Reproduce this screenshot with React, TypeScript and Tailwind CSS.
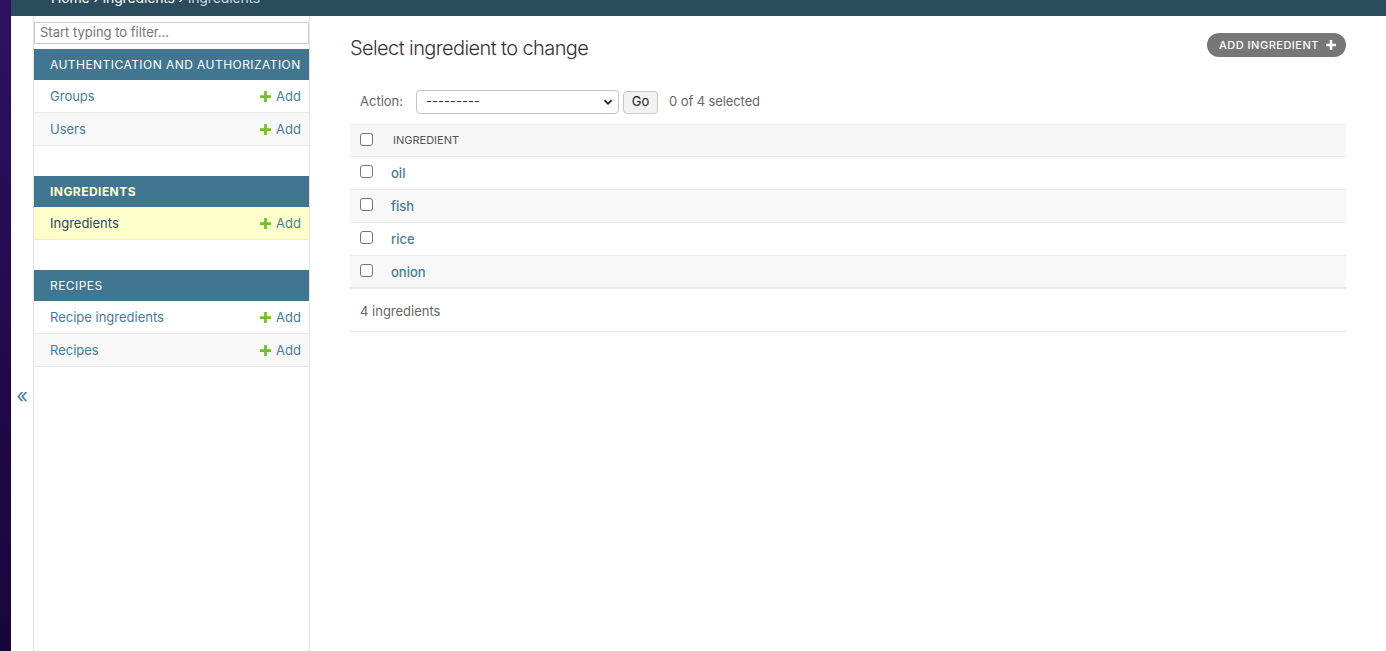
import React from "react";

const font = { fontFamily: 'Inter, "Noto Sans", "Liberation Sans", sans-serif' };

function Plus({ className = "" }: { className?: string }) {
  return (
    <svg viewBox="0 0 12 12" className={className} aria-hidden>
      <path d="M4.5 0h3v4.5H12v3H7.5V12h-3V7.5H0v-3h4.5z" fill="currentColor" />
    </svg>
  );
}

function Row({ label, alt, current }: { label: string; alt?: boolean; current?: boolean }) {
  const bg = current ? "bg-[#ffffcc]" : alt ? "bg-[#f8f8f8]" : "bg-white";
  return (
    <div className={`flex h-[33px] items-center justify-between border-b border-[#e8e8e8] pl-4 pr-[8px] pt-[1px] ${bg}`}>
      <span className={`text-[13px] ${current ? "text-[#264b5d]" : "text-[#447e9b]"}`}>{label}</span>
      <span className="flex items-center gap-[5px] text-[13px] text-[#447e9b]">
        <Plus className="h-[11px] w-[11px] text-[#70bf2b]" />
        Add
      </span>
    </div>
  );
}

function Caption({ label, current }: { label: string; current?: boolean }) {
  return (
    <div className="flex h-[31px] items-center bg-[#417690] pl-4">
      <span
        className={`text-[12px] uppercase tracking-[0.45px] ${current ? "font-bold text-[#ffffcc]" : "text-white"}`}
      >
        {label}
      </span>
    </div>
  );
}

function Checkbox({ className = "" }: { className?: string }) {
  return <span className={`block h-[13px] w-[13px] rounded-[3px] border border-[#767676] bg-white ${className}`} />;
}

export default function App() {
  const items = ["oil", "fish", "rice", "onion"];
  return (
    <div className="flex h-[651px] w-[1386px] overflow-hidden bg-white" style={font}>
      <div className="w-[11px] shrink-0 bg-gradient-to-b from-[#2e1062] to-[#17063a]" />
      <div className="flex min-w-0 flex-1 flex-col">
        <div className="h-[16px] shrink-0 overflow-hidden bg-[#2b4c5c]">
          <div className="mt-[-9px] pl-[40px] text-[14px] leading-[14px] tracking-[-0.15px] text-white">
            Home › Ingredients › <span className="text-[#c4dce8]">Ingredients</span>
          </div>
        </div>
        <div className="flex flex-1">
          <div className="w-[23px] shrink-0 border-r border-[#e4e4e4] pt-[369px] text-center">
            <span className="text-[20px] leading-[20px] text-[#447e9b]">«</span>
          </div>
          <div className="w-[276px] shrink-0 border-r border-[#e4e4e4] pt-[6px]">
            <div className="flex h-[22px] items-center border border-[#cccccc] px-[5px] text-[13px] text-[#757575]">
              Start typing to filter...
            </div>
            <div className="mt-[5px]">
              <Caption label="Authentication and Authorization" />
              <Row label="Groups" />
              <Row label="Users" alt />
            </div>
            <div className="mt-[30px]">
              <Caption label="Ingredients" current />
              <Row label="Ingredients" current />
            </div>
            <div className="mt-[30px]">
              <Caption label="Recipes" />
              <Row label="Recipe ingredients" />
              <Row label="Recipes" alt />
            </div>
          </div>
          <div className="min-w-0 flex-1 px-[40px] pt-[20px]">
            <div className="flex items-start justify-between">
              <h1 className="text-[20px] font-light leading-[24px] tracking-[-0.6px] text-[#333]">
                Select ingredient to change
              </h1>
              <div className="mt-[-3px] flex h-[24px] items-center gap-[7px] rounded-full bg-[#777777] pl-[12px] pr-[10px] text-[11px] font-medium uppercase tracking-[0.5px] text-white">
                Add ingredient
                <Plus className="h-[10px] w-[10px]" />
              </div>
            </div>
            <div className="mt-[30px] flex h-[24px] items-center pl-[10px] text-[13px] text-[#666]">
              <span>Action:</span>
              <div className="ml-[13px] flex h-[24px] w-[203px] items-center justify-between rounded-[4px] border border-[#c4c4c4] bg-white pl-[9px] pr-[5px] text-[#333]">
                <span>---------</span>
                <svg viewBox="0 0 10 10" className="h-[10px] w-[10px]">
                  <path d="M1.5 3.2 5 6.8l3.5-3.6" fill="none" stroke="#222" strokeWidth="1.8" />
                </svg>
              </div>
              <div className="ml-[4px] flex h-[23px] w-[35px] items-center justify-center rounded-[4px] border border-[#c8c8c8] bg-[#f2f2f2] text-[#222]">
                Go
              </div>
              <span className="ml-[11px] tracking-[-0.1px]">0 of 4 selected</span>
            </div>
            <div className="mt-[10px] w-full">
              <div className="flex h-[33px] items-center border-y border-[#e8e8e8] bg-[#f7f7f7] pl-[10px]">
                <Checkbox className="mt-[-2px]" />
                <span className="ml-[20px] text-[11px] uppercase text-[#555]">Ingredient</span>
              </div>
              {items.map((it, i) => (
                <div
                  key={it}
                  className={`flex h-[33px] items-center pl-[10px] pt-[2px] ${i === items.length - 1 ? "border-b-2" : "border-b"} border-[#e8e8e8] ${i % 2 ? "bg-[#f8f8f8]" : "bg-white"}`}
                >
                  <Checkbox className="mt-[-5px]" />
                  <span className="ml-[18px] text-[13px] font-medium text-[#447e9b]">{it}</span>
                </div>
              ))}
              <div className="flex h-[43px] items-center border-b border-[#e8e8e8] pl-[10px] pt-[3px] text-[13px] text-[#666]">
                4 ingredients
              </div>
            </div>
          </div>
        </div>
      </div>
    </div>
  );
}
